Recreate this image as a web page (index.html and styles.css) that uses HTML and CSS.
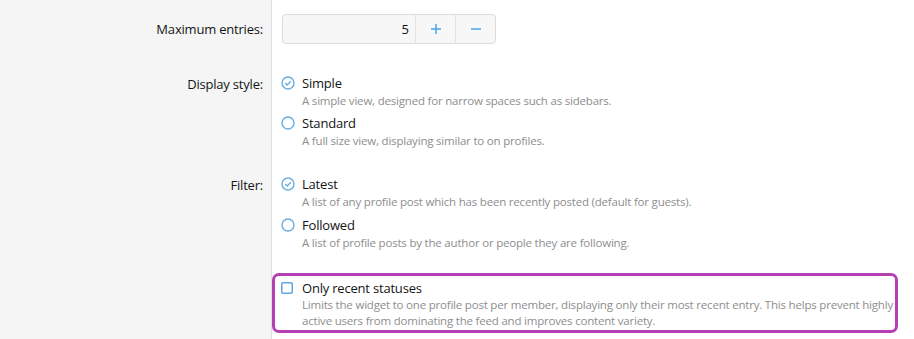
FILE: index.html
```html
<!DOCTYPE html>
<html>
<head>
<meta charset="utf-8">
<link rel="stylesheet" href="styles.css">
</head>
<body>
<div class="form">
  <div class="row row-first">
    <div class="label label-input">Maximum entries:</div>
    <div class="field">
      <div class="spinbox">
        <div class="spin-value">5</div>
        <div class="spin-btn">
          <svg width="12" height="12" viewBox="0 0 12 12"><path d="M6 1v10M1 6h10" stroke="#47a7eb" stroke-width="1.5"/></svg>
        </div>
        <div class="spin-btn">
          <svg width="12" height="12" viewBox="0 0 12 12"><path d="M1 6h10" stroke="#47a7eb" stroke-width="1.5"/></svg>
        </div>
      </div>
    </div>
  </div>

  <div class="row">
    <div class="label">Display style:</div>
    <div class="field">
      <div class="choice">
        <span class="radio checked"><svg width="14" height="14" viewBox="0 0 14 14"><circle cx="7" cy="7" r="6" fill="none" stroke="#6aaee0" stroke-width="1.4"/><path d="M4.3 7.1l1.9 1.9 3.6-3.7" fill="none" stroke="#6aaee0" stroke-width="1.4"/></svg></span>
        <div class="choice-text">
          <div class="choice-title">Simple</div>
          <div class="choice-desc">A simple view, designed for narrow spaces such as sidebars.</div>
        </div>
      </div>
      <div class="choice">
        <span class="radio"><svg width="14" height="14" viewBox="0 0 14 14"><circle cx="7" cy="7" r="6" fill="none" stroke="#6aaee0" stroke-width="1.4"/></svg></span>
        <div class="choice-text">
          <div class="choice-title">Standard</div>
          <div class="choice-desc">A full size view, displaying similar to on profiles.</div>
        </div>
      </div>
    </div>
  </div>

  <div class="row row-filter">
    <div class="label">Filter:</div>
    <div class="field">
      <div class="choice">
        <span class="radio checked"><svg width="14" height="14" viewBox="0 0 14 14"><circle cx="7" cy="7" r="6" fill="none" stroke="#6aaee0" stroke-width="1.4"/><path d="M4.3 7.1l1.9 1.9 3.6-3.7" fill="none" stroke="#6aaee0" stroke-width="1.4"/></svg></span>
        <div class="choice-text">
          <div class="choice-title">Latest</div>
          <div class="choice-desc">A list of any profile post which has been recently posted (default for guests).</div>
        </div>
      </div>
      <div class="choice choice-gap">
        <span class="radio"><svg width="14" height="14" viewBox="0 0 14 14"><circle cx="7" cy="7" r="6" fill="none" stroke="#6aaee0" stroke-width="1.4"/></svg></span>
        <div class="choice-text">
          <div class="choice-title">Followed</div>
          <div class="choice-desc">A list of profile posts by the author or people they are following.</div>
        </div>
      </div>
    </div>
  </div>

  <div class="row row-last">
    <div class="label"></div>
    <div class="field">
      <div class="highlight">
        <div class="choice">
          <span class="checkbox"><svg width="12" height="12" viewBox="0 0 12 12"><rect x="0.75" y="0.75" width="10.5" height="10.5" rx="1" fill="#fff" stroke="#5ea8df" stroke-width="1.5"/></svg></span>
          <div class="choice-text">
            <div class="choice-title">Only recent statuses</div>
            <div class="choice-desc desc-tight">Limits the widget to one profile post per member, displaying only their most recent entry. This helps prevent highly active users from dominating the feed and improves content variety.</div>
          </div>
        </div>
      </div>
    </div>
  </div>
</div>
</body>
</html>
```

FILE: styles.css
```css
html, body {
  margin: 0;
  padding: 0;
  background: #ffffff;
}
body {
  font-family: "Open Sans", "Noto Sans", sans-serif;
  font-size: 13px;
  color: #141414;
  width: 914px;
  height: 339px;
  overflow: hidden;
}
.form {
  display: flex;
  flex-direction: column;
  height: 339px;
  background: linear-gradient(to right, #f5f5f5 0, #f5f5f5 271px, #dedede 271px, #dedede 272px, #ffffff 272px);
}
.row {
  display: grid;
  grid-template-columns: 272px 1fr;
  padding-top: 10px;
  padding-bottom: 10px;
}
.row-first {
  padding-top: 14px;
  padding-bottom: 20px;
}
.row-filter {
  padding-top: 11px;
}
.row-last {
  padding-top: 7px;
}
.label {
  text-align: right;
  padding-right: 9px;
  padding-top: 2px;
  line-height: 17px;
  letter-spacing: -0.2px;
}
.label-input {
  padding-top: 7px;
}
.field {
  padding-left: 9px;
  padding-right: 16px;
}
.spinbox {
  display: flex;
  width: 214px;
  height: 30px;
  margin-left: 1px;
  box-sizing: border-box;
  border: 1px solid #dcdcdc;
  border-radius: 4px;
  background: #f7f7f7;
}
.spin-value {
  flex: 1;
  text-align: right;
  padding-right: 6px;
  line-height: 28px;
  border-right: 1px solid #e2e2e2;
}
.spin-btn {
  width: 39px;
  display: flex;
  align-items: center;
  justify-content: center;
}
.spin-btn + .spin-btn {
  border-left: 1px solid #e2e2e2;
}
.choice {
  display: flex;
  align-items: flex-start;
  gap: 7px;
  padding-bottom: 5px;
}
.choice-gap {
  margin-top: 1px;
}
.radio {
  width: 14px;
  height: 14px;
  margin-top: 2px;
  flex: none;
  display: flex;
}
.checkbox {
  width: 12px;
  height: 12px;
  margin-top: 3px;
  flex: none;
  display: flex;
}
.choice-title {
  line-height: 18px;
  letter-spacing: -0.2px;
}
.choice-desc {
  font-size: 11.5px;
  color: #8e8e8e;
  line-height: 17px;
  letter-spacing: -0.2px;
}
.desc-tight {
  line-height: 16px;
}
.highlight {
  margin-left: -9px;
  border: 3px solid #b540b3;
  border-radius: 7px;
  padding: 3px 1px 1px 6px;
}
.highlight .choice {
  padding-bottom: 0;
  gap: 9px;
}
```
